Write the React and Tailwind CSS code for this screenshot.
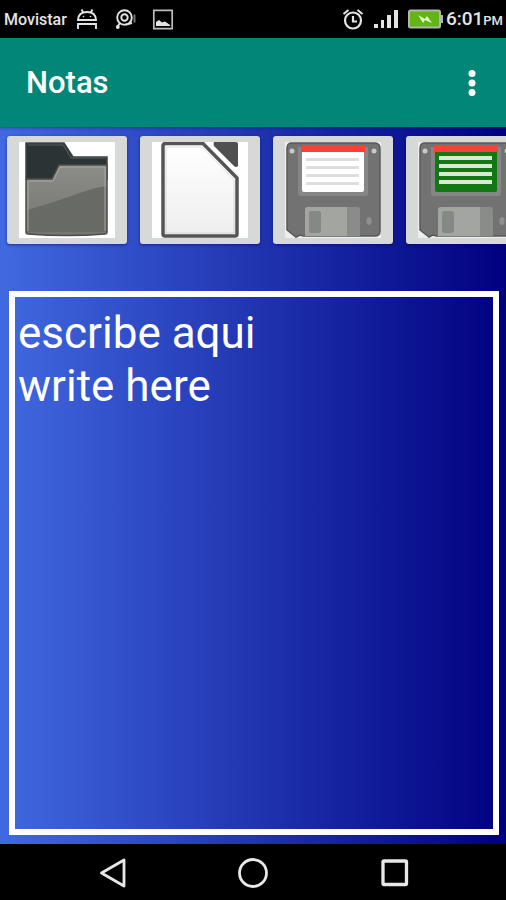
import React from "react";

function StatusBar() {
  return (
    <header className="flex h-[38px] shrink-0 items-center bg-black pl-1 pr-[3px] text-[#e4e4e4]">
      <span className="w-[72px] pt-px text-base font-medium">Movistar</span>
      <svg className="h-[22px] w-[22px]" viewBox="0 0 22 22" fill="none" stroke="currentColor" strokeWidth="1.9">
        <path d="M2 12C2.200 6.500 6 4 11 4s8.800 2.500 9 8zM5.500 1.500l2 3.500M16.500 1.500l-2 3.500M2 21v-5h18v5" />
        <circle cx="7.500" cy="8.500" r=".8" fill="currentColor" stroke="none" />
        <circle cx="14.500" cy="8.500" r=".8" fill="currentColor" stroke="none" />
      </svg>
      <svg className="ml-[17px] h-[22px] w-[22px]" viewBox="0 0 22 22" fill="none" stroke="currentColor" strokeWidth="1.9">
        <circle cx="9.500" cy="9.500" r="7.300" />
        <circle cx="9.500" cy="9.500" r="3.200" />
        <path d="M5 15L2.500 18.500M11 16.500l6-1.500" />
        <circle cx="2.800" cy="19" r="1.900" fill="currentColor" stroke="none" />
        <path d="M19.500 6.500v8" stroke="#777" />
      </svg>
      <svg className="ml-[15px] h-[22px] w-[22px]" viewBox="0 0 22 22">
        <path d="M1.800 2.300h18.400v18.400H1.800z" fill="none" stroke="#bdbdbd" strokeWidth="1.700" />
        <path d="M4 18v-4l3-2 3 2.500 3-1 5 3.500v1z" fill="currentColor" />
      </svg>

      <svg className="ml-auto h-[22px] w-[22px]" viewBox="0 0 22 22" fill="none" stroke="currentColor" strokeWidth="2.2">
        <circle cx="11" cy="12.500" r="8" />
        <path d="M1.500 6L6.500 2M20.500 6l-5-4M11 8v5.500h4" />
      </svg>
      <svg className="ml-[10px] h-[20px] w-[24px]" viewBox="0 0 24 20" fill="currentColor">
        <path d="M0 15h4v4H0zM7 11h3v8H7zM13 6h4v13h-4zM20 1h4v18h-4z" />
      </svg>
      <svg className="ml-[10px] h-[20px] w-[35px]" viewBox="0 0 35 20">
        <rect x="1" y="1.500" width="31" height="17" rx="1.500" fill="#61b515" stroke="#b4b4b4" strokeWidth="2" />
        <path d="M33 6h2v8h-2z" fill="#b4b4b4" />
        <path d="M10 6l7 4 2-3 5 7-7-3-2 3z" fill="#e0f3cd" />
      </svg>
      <span className="ml-[3px] pt-px text-[19px] font-medium">
        6:01<span className="text-[13px]">PM</span>
      </span>
    </header>
  );
}

function AppBar() {
  return (
    <div className="flex h-[89px] shrink-0 items-center justify-between bg-[#028678] pl-[26px] pr-[14px] text-white">
      <h1 className="pt-px text-[31px] font-medium leading-10">Notas</h1>
      <button type="button" aria-label="Más opciones" className="h-[40px] w-[40px]">
        <svg className="h-full w-full" viewBox="0 0 40 40" fill="currentColor">
          <circle cx="20" cy="10.500" r="3.500" />
          <circle cx="20" cy="20" r="3.500" />
          <circle cx="20" cy="29.500" r="3.500" />
        </svg>
      </button>
    </div>
  );
}

function FolderIcon() {
  return (
    <svg className="h-[96px] w-[96px]" viewBox="0 0 96 96">
      <defs>
        <linearGradient id="folderFront" x1="0" y1="0" x2="0" y2="1">
          <stop offset="0" stopColor="#8c8c89" />
          <stop offset="1" stopColor="#747571" />
        </linearGradient>
        <linearGradient id="folderShade" x1="0" y1="0" x2="0" y2="1">
          <stop offset="0" stopColor="#686a65" />
          <stop offset="1" stopColor="#62645e" stopOpacity=".7" />
        </linearGradient>
      </defs>
      <path d="M0 0h96v96H0z" fill="#fff" />
      <path d="M7 1h38l9 14h34v22H7z" fill="#2c3335" stroke="#3d4446" strokeWidth="1.500" />
      <path d="M9 3h35l8 13h35" fill="none" stroke="#575e60" />
      <path d="M7 37h26l7-14h48v67q0 2-2 2-38 3-77 0-2 0-2-2z" fill="url(#folderFront)" stroke="#4c4e4a" strokeWidth="1.500" />
      <path d="M8 68Q36 60 55 53T87 44v46H8z" fill="url(#folderShade)" />
      <path d="M9 89V39h25l7-14h45v64" fill="none" stroke="#a7a8a5" />
    </svg>
  );
}

function PageIcon() {
  return (
    <svg className="h-[96px] w-[96px]" viewBox="0 0 96 96">
      <defs>
        <linearGradient id="pageFill" x1="0" y1="0" x2="0" y2="1">
          <stop offset="0" stopColor="#ffffff" />
          <stop offset="1" stopColor="#eeeeee" />
        </linearGradient>
      </defs>
      <path d="M0 0h96v96H0z" fill="#fff" />
      <path d="M14 1.500h37L85 36v56q0 2-2 2H13q-2 0-2-2V4q0-2.500 3-2.500z" fill="url(#pageFill)" stroke="#555" strokeWidth="3.500" />
      <path d="M14 91V5h36l32 33v53z" fill="none" stroke="#aaa" strokeOpacity=".35" />
      <path d="M62 0h22q2 0 2 2v22q-2 2-4 0L62 4q-1-2 0-4z" fill="#505050" />
    </svg>
  );
}

function FloppyIcon({ green = false }) {
  return (
    <svg className="h-[96px] w-[96px]" viewBox="0 0 96 96">
      <path d="M0 0h96v96H0z" fill="#ecefeb" />
      <path d="M6 1h84q5 0 5 6v82q0 5-5 5H18l-3-1-4 2L2 88V7q0-6 4-6z" fill="#727272" stroke="#585858" strokeWidth="1.500" />
      <path d="M13 5h70v46q0 3-3 3H16q-3 0-3-3z" fill="#868686" />
      <path d="M16 3h64v8H16z" fill="#fa4038" />
      <path d="M17 10h62v38q0 2-2 2H19q-2 0-2-2z" fill={green ? "#137713" : "#fff"} />
      <g fill={green ? "#d9ead4" : "#dedede"}>
        <path d={green ? "M21 14h53v4H21z" : "M21 16h53v3H21z"} />
        <path d={green ? "M21 22h53v4H21z" : "M21 24h53v3H21z"} />
        <path d={green ? "M21 30h53v4H21z" : "M21 32h53v3H21z"} />
        <path d={green ? "M21 38h53v4H21z" : "M21 40h53v3H21z"} />
      </g>
      <circle cx="7" cy="9" r="2.500" fill="#c8cac7" />
      <circle cx="89" cy="9" r="2.500" fill="#c8cac7" />
      <path d="M20 68q0-3 3-3h49q3 0 3 3v26H20z" fill="#8a8c8a" />
      <path d="M20 68q0-3 3-3h39v29H20z" fill="#a2a5a0" />
      <path d="M24 71q0-2 2-2h7q3 0 3 2v17q0 3-3 3h-7q-2 0-2-3z" fill="#858986" />
      <ellipse cx="84" cy="79" rx="2.500" ry="4" fill="#8f8f8f" />
    </svg>
  );
}

function ToolButton({ label, children }) {
  return (
    <button
      type="button"
      aria-label={label}
      className="flex h-[108px] w-[120px] shrink-0 items-center justify-center rounded-[3px] bg-[#d7d9d8] shadow-[0_1px_3px_rgba(0,0,60,0.5)]"
    >
      {children}
    </button>
  );
}

export default function App() {
  return (
    <div className="flex min-h-screen flex-col bg-black font-['Roboto',sans-serif]">
      <StatusBar />
      <AppBar />
      <main className="flex flex-1 flex-col bg-linear-to-r/srgb from-[#4169e1] to-[#000080] shadow-[inset_0_4px_4px_-4px_rgba(0,0,90,0.5)]">
        <div className="flex gap-[13px] overflow-hidden pb-[47px] pl-[7px] pt-[9px]">
          <ToolButton label="Abrir"><FolderIcon /></ToolButton>
          <ToolButton label="Nuevo"><PageIcon /></ToolButton>
          <ToolButton label="Guardar"><FloppyIcon /></ToolButton>
          <ToolButton label="Guardar como"><FloppyIcon green /></ToolButton>
        </div>
        <textarea
          aria-label="Nota"
          defaultValue={"escribe aqui\nwrite here"}
          className="mb-[9px] ml-[9px] mr-[7px] block flex-1 resize-none border-[6px] border-white bg-transparent px-[3px] py-[10px] text-[44px] leading-[53px] text-white outline-none"
        />
      </main>
      <nav className="flex h-14 shrink-0 items-center justify-center gap-[102px] bg-black text-[#e8e8e8]">
        <button type="button" aria-label="Atrás" className="h-10 w-10">
          <svg className="h-full w-full" viewBox="0 0 40 40" fill="none" stroke="currentColor" strokeWidth="2.8" strokeLinejoin="round">
            <path d="M33 8v26L10.500 21z" />
          </svg>
        </button>
        <button type="button" aria-label="Inicio" className="h-10 w-10">
          <svg className="h-full w-full" viewBox="0 0 40 40" fill="none" stroke="currentColor" strokeWidth="2.8">
            <circle cx="20" cy="21" r="13.500" />
          </svg>
        </button>
        <button type="button" aria-label="Recientes" className="h-10 w-10">
          <svg className="h-full w-full" viewBox="0 0 40 40" fill="none" stroke="currentColor" strokeWidth="3.3">
            <rect x="8" y="9" width="23.500" height="23.500" rx="1" />
          </svg>
        </button>
      </nav>
    </div>
  );
}
